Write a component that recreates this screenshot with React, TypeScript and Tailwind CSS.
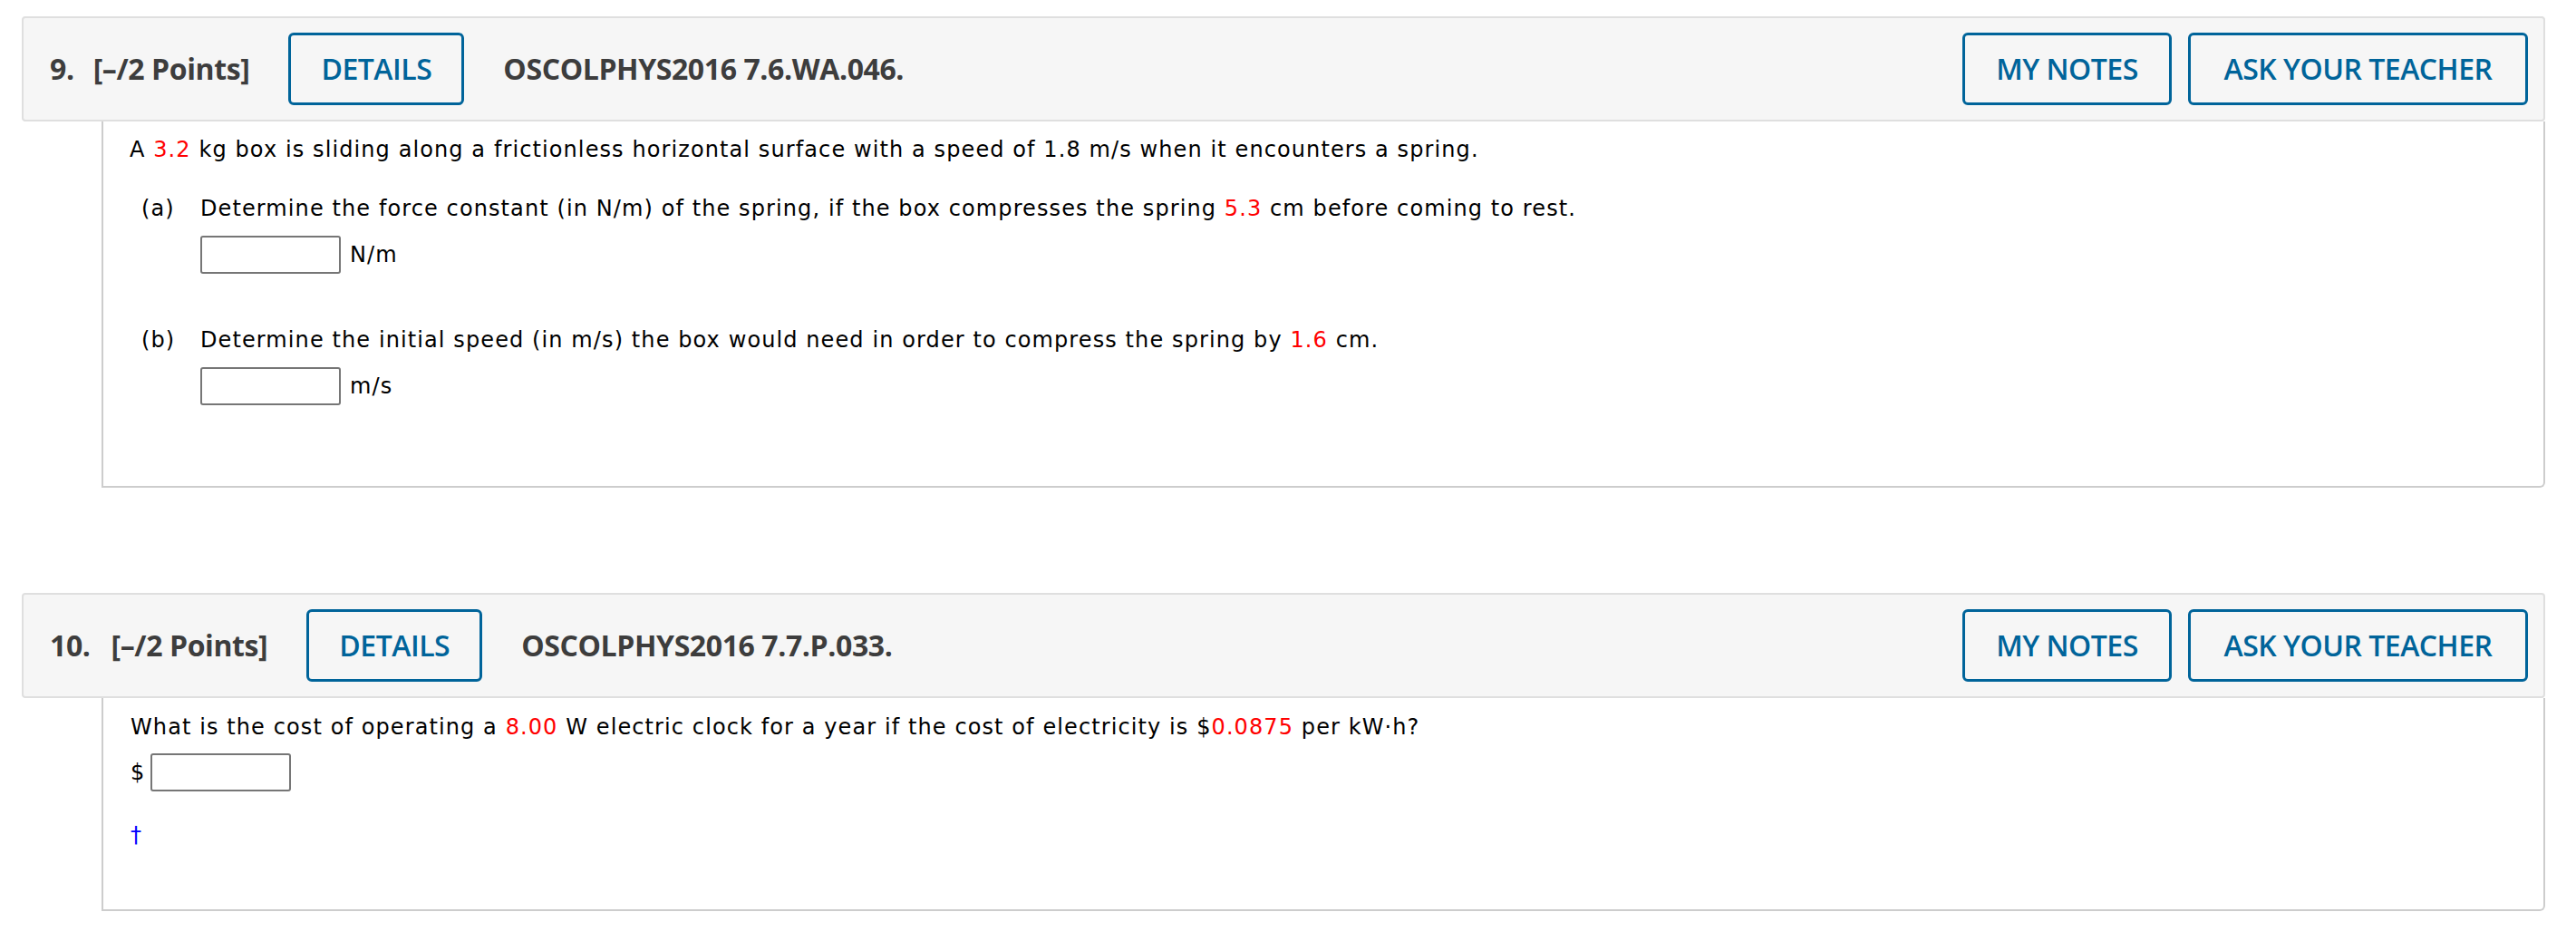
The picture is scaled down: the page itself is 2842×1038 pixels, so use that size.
import { ReactNode } from "react";

const font = "font-['DejaVu_Sans','Verdana',sans-serif] text-[24px] leading-[36px] tracking-[1.1px]";
const body = `${font} text-black`;

function Red({ children }: { children: ReactNode }) {
  return <span className="text-[#ff0000]">{children}</span>;
}

function OutlineButton({ label, className = "" }: { label: string; className?: string }) {
  return (
    <button
      className={`h-[80px] border-[3px] border-[#00649a] rounded-[6px] text-[#00649a] font-['Open_Sans',sans-serif] font-semibold text-[32px] tracking-[-0.5px] ${className}`}
    >
      {label}
    </button>
  );
}

function Header({ num, code, numGap }: { num: string; code: string; numGap: string }) {
  return (
    <div className="h-[116px] bg-[#f6f6f6] border-2 border-[#dfdfdf] rounded-[4px] flex items-center pl-[29px] pr-[17px] font-['Open_Sans',sans-serif]">
      <span className={`text-[32px] font-bold text-[#3d3d3d] tracking-[-0.4px] ${numGap}`}>{num}</span>
      <span className="text-[32px] font-bold text-[#3d3d3d] tracking-[-0.4px]">[–/2 Points]</span>
      <OutlineButton label="DETAILS" className="w-[194px] ml-[43px]" />
      <span className="text-[32px] font-bold text-[#3d3d3d] tracking-[-0.4px] ml-[43px]">{code}</span>
      <div className="ml-auto flex gap-[18px]">
        <OutlineButton label="MY NOTES" className="w-[231px]" />
        <OutlineButton label="ASK YOUR TEACHER" className="w-[375px]" />
      </div>
    </div>
  );
}

function AnswerBox({ unit }: { unit?: string }) {
  return (
    <div className="flex items-center gap-[10px]">
      <div className="w-[155px] h-[42px] border-2 border-[#767676] rounded-[3px] bg-white" />
      {unit && <span className={body}>{unit}</span>}
    </div>
  );
}

export default function App() {
  return (
    <div className="w-[2842px] h-[1038px] bg-white pt-[18px] pl-[24px] pr-[34px]">
      {/* question 9 */}
      <Header num="9." code="OSCOLPHYS2016 7.6.WA.046." numGap="mr-[21px]" />
      <div className="ml-[88px] h-[404px] border-2 border-t-0 border-[#cdcdcd] rounded-br-[6px] pt-[13px] pl-[29px]">
        <p className={body}>
          A <Red>3.2</Red> kg box is sliding along a frictionless horizontal surface with a speed of 1.8 m/s when it encounters a spring.
        </p>

        <div className="mt-[29px] flex">
          <span className={`${body} w-[78px] pl-[13px]`}>(a)</span>
          <div className="flex flex-col gap-[12px]">
            <p className={body}>
              Determine the force constant (in N/m) of the spring, if the box compresses the spring <Red>5.3</Red> cm before coming to rest.
            </p>
            <AnswerBox unit="N/m" />
          </div>
        </div>

        <div className="mt-[55px] flex">
          <span className={`${body} w-[78px] pl-[13px]`}>(b)</span>
          <div className="flex flex-col gap-[12px]">
            <p className={body}>
              Determine the initial speed (in m/s) the box would need in order to compress the spring by <Red>1.6</Red> cm.
            </p>
            <AnswerBox unit="m/s" />
          </div>
        </div>
      </div>

      {/* question 10 */}
      <div className="mt-[116px]">
        <Header num="10." code="OSCOLPHYS2016 7.7.P.033." numGap="mr-[23px]" />
        <div className="ml-[88px] h-[235px] border-2 border-t-0 border-[#cdcdcd] rounded-br-[6px] pt-[14px] pl-[30px]">
          <p className={body}>
            What is the cost of operating a <Red>8.00</Red> W electric clock for a year if the cost of electricity is $<Red>0.0875</Red> per kW·h?
          </p>
          <div className="mt-[11px] flex items-center gap-[6px]">
            <span className={body}>$</span>
            <AnswerBox />
          </div>
          <p className={`${font} text-[#0000ff] mt-[30px]`}>†</p>
        </div>
      </div>
    </div>
  );
}
